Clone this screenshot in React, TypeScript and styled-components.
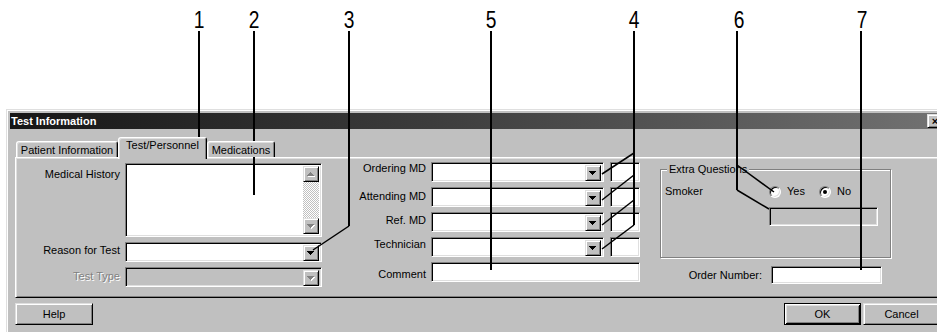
import React from 'react';
import styled, { createGlobalStyle, css } from 'styled-components';

const GlobalStyle = createGlobalStyle`
  html, body { margin: 0; padding: 0; background: #ffffff; }
  body { font-family: "Liberation Sans", Arial, sans-serif; font-size: 11px; color: #000; }
  * { box-sizing: border-box; }
`;

const raised = css`
  background: #c0c0c0;
  border: 1px solid;
  border-color: #dfdfdf #000000 #000000 #dfdfdf;
  box-shadow: inset 1px 1px 0 #ffffff, inset -1px -1px 0 #808080;
`;

const sunken = css`
  border: 1px solid;
  border-color: #808080 #ffffff #ffffff #808080;
  box-shadow: inset 1px 1px 0 #000000, inset -1px -1px 0 #dfdfdf;
`;

const Stage = styled.div`
  position: relative;
  width: 937px;
  height: 332px;
  overflow: hidden;
  background: #fff;
  padding: 109px 0 0 6px;
`;

const Window = styled.div`
  width: 943px;
  height: 240px;
  padding: 3px;
  background: #c0c0c0;
  border: 1px solid;
  border-color: #dfdfdf #000 #000 #dfdfdf;
  box-shadow: inset 1px 1px 0 #fff, inset -1px -1px 0 #808080;
  display: flex;
  flex-direction: column;
`;

const TitleBar = styled.div`
  height: 16px;
  flex: none;
  display: flex;
  align-items: center;
  padding: 0 2px 0 1px;
  background: linear-gradient(to right, #161616 0%, #3c3c3c 45%, #727272 100%);
`;

const Title = styled.span`
  color: #fff;
  font-weight: bold;
  font-size: 11px;
  line-height: 16px;
`;

const CloseButton = styled.span`
  ${raised};
  margin-left: auto;
  width: 16px;
  height: 14px;
  display: flex;
  align-items: center;
  justify-content: center;
  font-size: 11px;
  font-weight: bold;
  line-height: 1;
`;

const Body = styled.div`
  flex: 1;
  display: flex;
  flex-direction: column;
  padding: 8px 5px 0 5px;
`;

const TabStrip = styled.div`
  display: flex;
  align-items: flex-end;
  height: 20px;
  padding-left: 1px;
`;

const Tab = styled.div<{ $active?: boolean; $w: number }>`
  width: ${(p) => p.$w}px;
  height: ${(p) => (p.$active ? 22 : 16)}px;
  margin-bottom: ${(p) => (p.$active ? -2 : 0)}px;
  position: relative;
  z-index: ${(p) => (p.$active ? 2 : 1)};
  background: #c0c0c0;
  border: 1px solid;
  border-bottom: none;
  border-color: #fff #000 transparent #fff;
  border-radius: 3px 3px 0 0;
  box-shadow: inset 1px 1px 0 #dfdfdf, inset -1px 0 0 #808080;
  text-align: center;
  font-size: 11px;
  line-height: 13px;
  padding-top: ${(p) => (p.$active ? 1 : 2)}px;
  white-space: nowrap;
`;

const Panel = styled.div`
  height: 141px;
  flex: none;
  background: #c0c0c0;
  border: 1px solid;
  border-color: #fff #000 #000 #fff;
  box-shadow: inset 1px 1px 0 #dfdfdf, inset -1px -1px 0 #808080;
  padding: 4px 0 0 2px;
  display: flex;
  align-items: flex-start;
`;

const Column = styled.div<{ $w: number; $ml?: number; $mt?: number }>`
  width: ${(p) => p.$w}px;
  margin-left: ${(p) => p.$ml ?? 0}px;
  margin-top: ${(p) => p.$mt ?? 0}px;
  display: flex;
  flex-direction: column;
  gap: 5px;
`;

const Row = styled.div<{ $gap?: number }>`
  display: flex;
  align-items: flex-start;
  gap: ${(p) => p.$gap ?? 5}px;
`;

const Label = styled.span<{ $w: number; $dy?: number; $disabled?: boolean; $left?: boolean }>`
  width: ${(p) => p.$w}px;
  flex: none;
  text-align: ${(p) => (p.$left ? 'left' : 'right')};
  font-size: 11px;
  line-height: 13px;
  padding-top: ${(p) => p.$dy ?? 3}px;
  white-space: nowrap;
  color: ${(p) => (p.$disabled ? '#808080' : '#000')};
  text-shadow: ${(p) => (p.$disabled ? '1px 1px 0 #fff' : 'none')};
`;

const Field = styled.div<{ $w: number; $h?: number; $disabled?: boolean }>`
  ${sunken};
  width: ${(p) => p.$w}px;
  height: ${(p) => p.$h ?? 20}px;
  flex: none;
  background: ${(p) => (p.$disabled ? '#c0c0c0' : '#fff')};
  display: flex;
  justify-content: flex-end;
  padding: 2px;
`;

const DropButton = styled.span`
  ${raised};
  width: 16px;
  height: 16px;
  display: flex;
  align-items: center;
  justify-content: center;
`;

const ScrollBar = styled.div`
  width: 16px;
  display: flex;
  flex-direction: column;
`;

const ScrollTrack = styled.div`
  flex: 1;
  background-color: #fff;
  background-image: conic-gradient(#c0c0c0 25%, #fff 0 50%, #c0c0c0 0 75%, #fff 0);
  background-size: 2px 2px;
`;

const GroupBox = styled.fieldset`
  margin: 0;
  padding: 9px 0 0 4px;
  width: 231px;
  height: 96px;
  min-width: 0;
  border: 1px solid #808080;
  box-shadow: inset 1px 1px 0 #fff, 1px 1px 0 #fff;
`;

const Legend = styled.legend`
  padding: 0 2px;
  margin-left: 2px;
  font-size: 11px;
  line-height: 14px;
  background: #c0c0c0;
`;

const RadioRow = styled.div`
  display: flex;
  align-items: center;
  height: 13px;
`;

const RadioOption = styled.span<{ $ml?: number }>`
  display: inline-flex;
  align-items: center;
  gap: 6px;
  margin-left: ${(p) => p.$ml ?? 0}px;
  font-size: 11px;
  line-height: 13px;
`;

const Radio = styled.span<{ $checked?: boolean }>`
  width: 12px;
  height: 12px;
  border-radius: 50%;
  background: #fff;
  border: 1px solid;
  border-color: #808080 #ffffff #ffffff #808080;
  box-shadow: inset 1px 1px 0 #000, inset -1px -1px 0 #dfdfdf;
  display: inline-flex;
  align-items: center;
  justify-content: center;
  &::after {
    content: '';
    width: 4px;
    height: 4px;
    border-radius: 50%;
    background: ${(p) => (p.$checked ? '#000' : 'transparent')};
  }
`;

const Indented = styled.div<{ $ml: number; $mt: number }>`
  margin-left: ${(p) => p.$ml}px;
  margin-top: ${(p) => p.$mt}px;
`;

const ButtonBar = styled.div`
  display: flex;
  gap: 2px;
  margin-top: 5px;
`;

const PushButton = styled.button<{ $default?: boolean; $push?: boolean }>`
  ${raised};
  width: ${(p) => (p.$push ? 78 : 77)}px;
  height: 22px;
  margin-right: ${(p) => (p.$push ? 'auto' : '0')};
  padding: 0;
  font-family: "Liberation Sans", Arial, sans-serif;
  font-size: 11px;
  color: #000;
  ${(p) =>
    p.$default &&
    css`
      border-color: #000;
      box-shadow: inset 1px 1px 0 #fff, inset -1px -1px 0 #000, inset 2px 2px 0 #dfdfdf, inset -2px -2px 0 #808080;
    `}
`;

const Callouts = styled.svg`
  position: absolute;
  left: 0;
  top: 0;
  width: 937px;
  height: 332px;
  pointer-events: none;
`;

const Arrow: React.FC<{ dir: 'up' | 'down'; disabled?: boolean }> = ({ dir, disabled }) => {
  const d =
    dir === 'down'
      ? 'M0 0h7v1H0zM1 1h5v1H1zM2 2h3v1H2zM3 3h1v1H3z'
      : 'M3 0h1v1H3zM2 1h3v1H2zM1 2h5v1H1zM0 3h7v1H0z';
  return (
    <svg width="8" height="5" viewBox="0 0 8 5" shapeRendering="crispEdges">
      {disabled && <path d={d} fill="#fff" transform="translate(1 1)" />}
      <path d={d} fill={disabled ? '#808080' : '#000'} />
    </svg>
  );
};

const Combo: React.FC<{ w: number; disabled?: boolean }> = ({ w, disabled }) => (
  <Field $w={w} $disabled={disabled}>
    <DropButton>
      <Arrow dir="down" disabled={disabled} />
    </DropButton>
  </Field>
);

const labels = [
  { n: '1', x: 199 },
  { n: '2', x: 254 },
  { n: '3', x: 349 },
  { n: '5', x: 491 },
  { n: '4', x: 634 },
  { n: '6', x: 739 },
  { n: '7', x: 862 },
];

const leaders: { d: string; w: number }[] = [
  { d: 'M199 31V150', w: 2 },
  { d: 'M254 31V195', w: 2 },
  { d: 'M349 31V226', w: 2 },
  { d: 'M349 226L313 250', w: 1.5 },
  { d: 'M491 31V270', w: 2 },
  { d: 'M634 31V225', w: 2 },
  { d: 'M634 153L602 174', w: 1.5 },
  { d: 'M634 175L602 200', w: 1.5 },
  { d: 'M634 200L602 225', w: 1.5 },
  { d: 'M634 225L602 249', w: 1.5 },
  { d: 'M737 31V190', w: 2 },
  { d: 'M737 190L769 209', w: 1.5 },
  { d: 'M737 165L774 192', w: 1.5 },
  { d: 'M861 31V270', w: 2 },
];

const mdRows = [
  { label: 'Ordering MD', dy: 0 },
  { label: 'Attending MD', dy: 3 },
  { label: 'Ref. MD', dy: 2 },
  { label: 'Technician', dy: 1 },
];

export default function App() {
  return (
    <>
      <GlobalStyle />
      <Stage>
        <Window>
          <TitleBar>
            <Title>Test Information</Title>
            <CloseButton>×</CloseButton>
          </TitleBar>
          <Body>
            <TabStrip>
              <Tab $w={102}>Patient Information</Tab>
              <Tab $w={89} $active>
                Test/Personnel
              </Tab>
              <Tab $w={68}>Medications</Tab>
            </TabStrip>
            <Panel>
              <Column $w={304} $mt={1}>
                <Row>
                  <Label $w={102} $dy={5}>
                    Medical History
                  </Label>
                  <Field $w={197} $h={74}>
                    <ScrollBar>
                      <DropButton>
                        <Arrow dir="up" disabled />
                      </DropButton>
                      <ScrollTrack />
                      <DropButton>
                        <Arrow dir="down" disabled />
                      </DropButton>
                    </ScrollBar>
                  </Field>
                </Row>
                <Row>
                  <Label $w={102} $dy={2}>
                    Reason for Test
                  </Label>
                  <Combo w={197} />
                </Row>
                <Row>
                  <Label $w={102} $dy={3} $disabled>
                    Test Type
                  </Label>
                  <Combo w={197} disabled />
                </Row>
              </Column>

              <Column $w={300} $ml={18}>
                {mdRows.map((r) => (
                  <Row key={r.label}>
                    <Label $w={86} $dy={r.dy}>
                      {r.label}
                    </Label>
                    <Row $gap={6}>
                      <Combo w={173} />
                      <Field $w={30} />
                    </Row>
                  </Row>
                ))}
                <Row>
                  <Label $w={86} $dy={6}>
                    Comment
                  </Label>
                  <Field $w={209} />
                </Row>
              </Column>

              <Column $w={231} $ml={20} $mt={0} style={{ gap: 8 }}>
                <GroupBox>
                  <Legend>Extra Questions</Legend>
                  <RadioRow>
                    <Label $w={104} $dy={0} $left>
                      Smoker
                    </Label>
                    <RadioOption>
                      <Radio />
                      Yes
                    </RadioOption>
                    <RadioOption $ml={14}>
                      <Radio $checked />
                      No
                    </RadioOption>
                  </RadioRow>
                  <Indented $ml={104} $mt={9}>
                    <Field $w={109} $h={19} $disabled />
                  </Indented>
                </GroupBox>
                <Row $gap={9}>
                  <Label $w={102} $dy={3}>
                    Order Number:
                  </Label>
                  <Field $w={111} $h={18} />
                </Row>
              </Column>
            </Panel>
            <ButtonBar>
              <PushButton $push>Help</PushButton>
              <PushButton $default>OK</PushButton>
              <PushButton>Cancel</PushButton>
            </ButtonBar>
          </Body>
        </Window>

        <Callouts viewBox="0 0 937 332">
          {labels.map((l) => (
            <text
              key={l.n}
              transform={`translate(${l.x} 28) scale(0.8 1)`}
              textAnchor="middle"
              fontFamily="Liberation Sans, Arial, sans-serif"
              fontSize="24"
              fill="#000"
            >
              {l.n}
            </text>
          ))}
          {leaders.map((s, i) => (
            <path key={i} d={s.d} stroke="#000" strokeWidth={s.w} fill="none" />
          ))}
        </Callouts>
      </Stage>
    </>
  );
}
